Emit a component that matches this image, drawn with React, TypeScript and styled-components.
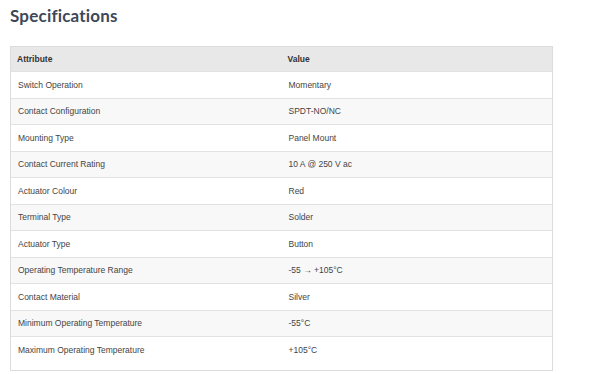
import React from 'react'
import styled, { createGlobalStyle } from 'styled-components'

const GlobalStyle = createGlobalStyle`
  body {
    margin: 0;
    background: #ffffff;
    font-family: "Liberation Sans", Arial, sans-serif;
  }
`

const Page = styled.div`
  padding: 6px 47px 0 10px;
`

const Title = styled.h2`
  margin: 0 0 20px 0;
  font-family: "Lato", "Liberation Sans", sans-serif;
  font-weight: 700;
  font-size: 17px;
  line-height: 20px;
  letter-spacing: 0.2px;
  color: #3c4858;
`

const Panel = styled.div`
  border: 1px solid #dcdcdc;
  border-top: none;
  padding-bottom: 7px;
`

const Table = styled.table`
  width: 100%;
  border-collapse: collapse;
  table-layout: fixed;
`

const HeadCell = styled.th`
  background: #e8e8e8;
  border-top: 1px solid #dcdcdc;
  height: 24px;
  padding: 0 6px;
  text-align: left;
  font-size: 8.5px;
  font-weight: 700;
  color: #333333;
`

const Row = styled.tr<{ $shaded: boolean }>`
  background: ${p => (p.$shaded ? '#f8f8f8' : '#ffffff')};
  border-top: 1px solid #e2e2e2;
`

const Cell = styled.td`
  height: 25.5px;
  padding: 0 6px 0 7px;
  font-size: 8.5px;
  color: #444444;
`

const specs: [string, string][] = [
  ['Switch Operation', 'Momentary'],
  ['Contact Configuration', 'SPDT-NO/NC'],
  ['Mounting Type', 'Panel Mount'],
  ['Contact Current Rating', '10 A @ 250 V ac'],
  ['Actuator Colour', 'Red'],
  ['Terminal Type', 'Solder'],
  ['Actuator Type', 'Button'],
  ['Operating Temperature Range', '-55 → +105°C'],
  ['Contact Material', 'Silver'],
  ['Minimum Operating Temperature', '-55°C'],
  ['Maximum Operating Temperature', '+105°C'],
]

export default function App() {
  return (
    <Page>
      <GlobalStyle />
      <Title>Specifications</Title>
      <Panel>
        <Table>
          <thead>
            <tr>
              <HeadCell>Attribute</HeadCell>
              <HeadCell>Value</HeadCell>
            </tr>
          </thead>
          <tbody>
            {specs.map(([name, value], i) => (
              <Row key={name} $shaded={i % 2 === 1}>
                <Cell>{name}</Cell>
                <Cell>{value}</Cell>
              </Row>
            ))}
          </tbody>
        </Table>
      </Panel>
    </Page>
  )
}
